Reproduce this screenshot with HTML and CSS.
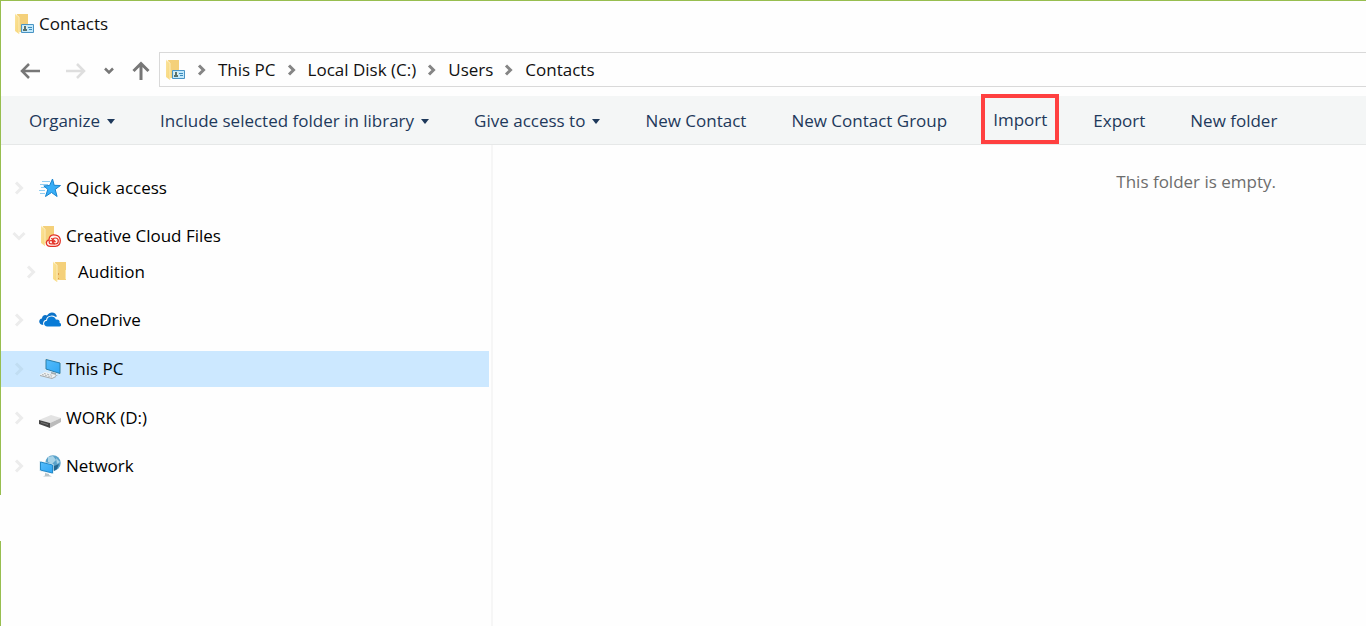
FILE: index.html
```html
<!DOCTYPE html>
<html lang="en">
<head>
<meta charset="utf-8">
<title>Contacts</title>
<link rel="stylesheet" href="styles.css">
</head>
<body>
<svg class="sprite" aria-hidden="true">
  <defs>
    <linearGradient id="gold" x1="0" y1="0" x2="1" y2="1"><stop offset="0" stop-color="#fbe39b"/><stop offset="1" stop-color="#f7d678"/></linearGradient>
    <linearGradient id="screen" x1="0" y1="0" x2="1" y2="1"><stop offset="0" stop-color="#56bdfb"/><stop offset="1" stop-color="#2ea6f5"/></linearGradient>
    <symbol id="contacts" viewBox="0 0 20 22">
      <path d="M2 1h11v18H4z" fill="#f4d07a"/>
      <path d="M0 1l4 3v17L0 18z" fill="url(#gold)"/>
      <path d="M0 1l4 3v17" fill="none" stroke="#fcedbc"/>
      <path d="M6.500 11.500h12v8h-12z" fill="#c3e9fb" stroke="#4a94c4"/>
      <path d="M8 13h4v5H8z" fill="#e7eee9"/>
      <path d="M9 13h2v3H9zM8 16h4v2H8z" fill="#58726d"/>
      <path d="M13 14.500h4M14 16.500h3" stroke="#3d8cbd"/>
    </symbol>
    <symbol id="folder" viewBox="0 0 14 22">
      <path d="M2 1h11v18H4z" fill="#f4d07a"/>
      <path d="M0 1l4 3v17L0 18z" fill="url(#gold)"/>
      <path d="M0 1l4 3v17" fill="none" stroke="#fcedbc"/>
      <path d="M12.500 9v9" stroke="#fae6a8"/>
      <path d="M5.500 12v2M5.500 17v1" stroke="#df9c4c"/>
    </symbol>
    <symbol id="chevron" viewBox="0 0 10 12"><path d="M2 1.500L6.500 6L2 10.500" fill="none" stroke="currentColor" stroke-width="3"/></symbol>
    <symbol id="expand" viewBox="0 0 10 14"><path d="M2 1.500L7.500 7L2 12.500" fill="none" stroke="currentColor" stroke-width="3"/></symbol>
  </defs>
</svg>
<div class="window">
  <header class="title-bar">
    <svg class="folder-icon"><use href="#contacts"/></svg>
    <h1 class="title">Contacts</h1>
  </header>

  <div class="nav-bar">
    <div class="nav-buttons">
      <button class="nav-button" aria-label="Back"><svg width="20" height="16" viewBox="0 0 20 16"><path d="M20 8H2M9 1L2 8l7 7" fill="none" stroke="#777" stroke-width="2.500"/></svg></button>
      <button class="nav-button" aria-label="Forward"><svg width="20" height="16" viewBox="0 0 20 16"><path d="M0 8h18M11 1l7 7l-7 7" fill="none" stroke="#dedede" stroke-width="2.500"/></svg></button>
      <button class="nav-button" aria-label="Recent locations"><svg width="10" height="8" viewBox="0 0 10 8"><path d="M1 1.500l4 4l4-4" fill="none" stroke="#777" stroke-width="2.500"/></svg></button>
      <button class="nav-button" aria-label="Up"><svg width="18" height="20" viewBox="0 0 18 20"><path d="M9 19V2M1.500 10L9 2.500L16.500 10" fill="none" stroke="#777" stroke-width="3"/></svg></button>
    </div>
    <nav class="address" aria-label="Address">
      <svg class="folder-icon"><use href="#contacts"/></svg>
      <svg class="separator"><use href="#chevron"/></svg>
      <a class="crumb" href="#">This PC</a>
      <svg class="separator"><use href="#chevron"/></svg>
      <a class="crumb" href="#">Local Disk (C:)</a>
      <svg class="separator"><use href="#chevron"/></svg>
      <a class="crumb" href="#">Users</a>
      <svg class="separator"><use href="#chevron"/></svg>
      <a class="crumb" href="#">Contacts</a>
    </nav>
  </div>

  <div class="toolbar">
    <button class="command">Organize<span class="caret"></span></button>
    <button class="command">Include selected folder in library<span class="caret"></span></button>
    <button class="command">Give access to<span class="caret"></span></button>
    <button class="command">New Contact</button>
    <button class="command">New Contact Group</button>
    <button class="command highlighted">Import</button>
    <button class="command">Export</button>
    <button class="command">New folder</button>
  </div>

  <div class="content">
    <nav class="sidebar" aria-label="Folders">
      <a class="item" href="#">
        <svg class="expander"><use href="#expand"/></svg>
        <svg class="item-icon" viewBox="0 0 22 22"><path d="M3 4.500h8M1 7.500h8M2 10.500h5M0 13.500h6M1 16.500h5" stroke="#8fcdf2"/><path d="M13.500 2l1.700 6.300l6.300.2l-5.300 3.900l1.900 7.100l-5.600-4l-6 4l2.300-7.100l-4-3.500l5.800-.4z" fill="#38aef7" stroke="#1784cf"/></svg>
        <span>Quick access</span>
      </a>
      <div class="group">
        <a class="item" href="#">
          <svg class="expander open"><use href="#expand"/></svg>
          <svg class="item-icon" viewBox="0 0 22 22"><path d="M4 1h11v17H6z" fill="#f4d07a"/><path d="M2 1l4 3v17l-4-3z" fill="url(#gold)"/><path d="M2 1l4 3v16" fill="none" stroke="#fcedbc"/><path d="M11 11.500c2-2.500 10-2.500 10.300 4c0 4-2 5.800-5 5.800h-5c-5 0-5-6-1.300-6.300c0-1.500.3-2.500 1-3.500z" fill="#fff3ee" stroke="#e33126" stroke-width="1.300"/><ellipse cx="16.300" cy="16" rx="3" ry="3" fill="none" stroke="#e33126" stroke-width="1.200"/><path d="M16 18.800h-4c-2.500 0-2.500-3.300 0-3.300c1.500 0 2 1 3.200 2M12 13.500c1.500 0 2.500 1.500 4.500 3.500" fill="none" stroke="#e33126" stroke-width="1.200"/></svg>
          <span>Creative Cloud Files</span>
        </a>
        <a class="item child" href="#">
          <svg class="expander"><use href="#expand"/></svg>
          <svg class="item-icon"><use href="#folder"/></svg>
          <span>Audition</span>
        </a>
      </div>
      <a class="item" href="#">
        <svg class="expander"><use href="#expand"/></svg>
        <svg class="item-icon" viewBox="0 0 22 22"><path d="M5 16C-1 16-1 10 3 9.500c0-3 3-4.500 5-3c3-5 9-3.500 10 1l-5 1l-5 3z" fill="#0b72c8"/><path d="M8.500 17.500c-4.500 0-4.500-5.500-.5-5.800c0-5 7.500-5.500 9-1c3-.5 4 1.300 3.500 3c2.500 1 2 3.800 0 3.800z" fill="#087bd6" stroke="#fefefe" stroke-width="2" paint-order="stroke"/></svg>
        <span>OneDrive</span>
      </a>
      <a class="item selected" href="#" aria-current="true">
        <svg class="expander"><use href="#expand"/></svg>
        <svg class="item-icon" viewBox="0 0 22 22"><path d="M6 0l16 4v13L6 12z" fill="#d8e8ee"/><path d="M7 1.500l14 3.500v10.500L7 11z" fill="url(#screen)" stroke="#287eae"/><path d="M12 14l5 1v2l2 1h-9l2-1z" fill="#9fabb0"/><path d="M0 17l6-3l11 3l-4 4z" fill="#f1f3f3"/><path d="M1 17.500l12 3l4-2" fill="none" stroke="#a3a9ac"/><path d="M3 16.500l10 2.500M5 15.500l9 2" stroke="#b0b6ba" stroke-dasharray="2 1"/></svg>
        <span>This PC</span>
      </a>
      <a class="item" href="#">
        <svg class="expander"><use href="#expand"/></svg>
        <svg class="item-icon" viewBox="0 0 22 22"><path d="M0 13l12-5l10 3l-11 5z" fill="#e3e3e3"/><path d="M11 16l11-5v4l-11 6z" fill="#bbb"/><path d="M0 13l11 3v5L0 17z" fill="#454545"/><path d="M2 15l7 2v1l-7-2z" fill="#777"/></svg>
        <span>WORK (D:)</span>
      </a>
      <a class="item" href="#">
        <svg class="expander"><use href="#expand"/></svg>
        <svg class="item-icon" viewBox="0 0 22 22"><circle cx="14" cy="8" r="7.700" fill="#5aa2ca"/><path d="M9 2l5-1l3 4l-4 4l-4-2zM17 3l4 4l-3 2z" fill="#a8d3e7"/><path d="M15 11l5-2l-2 5l-3 2z" fill="#25658e"/><path d="M.5 6l14 3v10L.5 16z" fill="#d2e3ec"/><path d="M1.500 7l12 3v8l-12-3z" fill="url(#screen)" stroke="#228ac9"/><path d="M6 18l4 1v1l3 1.500H4l2-1z" fill="#b8c4c9"/></svg>
        <span>Network</span>
      </a>
    </nav>
    <main class="files"><p class="empty">This folder is empty.</p></main>
  </div>
  <div class="edge-gap"></div>
</div>
</body>
</html>
```
FILE: styles.css
```css
* {
  box-sizing: border-box;
}

body {
  margin: 0;
  background: #fefefe;
  color: #111;
  font: 17px/24px "Open Sans", "Noto Sans", sans-serif;
}

a {
  color: inherit;
  text-decoration: none;
}

button {
  padding: 0;
  border: 0;
  background: none;
  color: inherit;
  font: inherit;
}

.sprite {
  position: absolute;
  width: 0;
  height: 0;
}

.window {
  position: relative;
  display: flex;
  flex-direction: column;
  min-height: 100vh;
  border-top: 1px solid #97be4f;
  border-left: 1px solid #97be4f;
}

.title-bar {
  display: flex;
  align-items: center;
  gap: 4px;
  height: 45px;
  padding-left: 14px;
}

.title {
  margin: 0;
  font-size: 17px;
  font-weight: 400;
}

.folder-icon {
  flex: none;
  width: 20px;
  height: 22px;
}

.nav-bar {
  display: flex;
  align-items: center;
  height: 50px;
  padding-bottom: 3px;
}

.nav-buttons {
  display: flex;
  flex: none;
  align-items: center;
  justify-content: space-between;
  width: 158px;
  padding: 2px 9px 0 19px;
}

.nav-button {
  display: flex;
}

.nav-button:first-child {
  margin-right: 8px;
}

.address {
  display: flex;
  flex: 1;
  align-items: center;
  gap: 11px;
  height: 35px;
  padding-left: 6px;
  border: 1px solid #d9d9d9;
  border-right: 0;
}

.separator {
  flex: none;
  width: 10px;
  height: 12px;
  color: #858585;
}

.toolbar {
  display: flex;
  align-items: center;
  gap: 45px;
  height: 49px;
  padding: 2px 0 0 28px;
  border-bottom: 1px solid #e6e8e8;
  background: #f4f6f6;
  color: #1e395b;
  white-space: nowrap;
}

.command {
  display: flex;
  align-items: center;
  gap: 7px;
}

.caret {
  border: 4px solid transparent;
  border-top: 5px solid #1e395b;
  border-bottom: 0;
}

.highlighted {
  height: 50px;
  margin: -4px -11px 0;
  padding: 2px 8px 0;
  border: 4px solid #ff4040;
}

.content {
  display: flex;
  flex: 1;
}

.sidebar {
  display: flex;
  flex: none;
  flex-direction: column;
  gap: 12px;
  width: 492px;
  padding: 25px 2px 25px 0;
  border-right: 2px solid #f6f6f6;
}

.item {
  display: flex;
  align-items: center;
  height: 36px;
  padding-left: 13px;
  color: #000;
}

.child {
  padding-left: 25px;
}

.selected {
  margin: 1px 0;
  background: #cce8ff;
}

.expander {
  width: 10px;
  height: 14px;
  margin-right: 15px;
  color: #ececec;
}

.open {
  transform: rotate(90deg);
}

.selected .expander {
  color: #c1ddf2;
}

.item-icon {
  width: 22px;
  height: 22px;
  margin-right: 5px;
}

.child .item-icon {
  width: 14px;
  margin: 0 11px 0 2px;
}

.files {
  flex: 1;
  padding: 25px 90px 0 0;
}

.empty {
  margin: 0;
  color: #6d6d6d;
  text-align: right;
}

.edge-gap {
  position: absolute;
  top: 494px;
  left: -1px;
  width: 1px;
  height: 46px;
  background: #fefefe;
}
```
